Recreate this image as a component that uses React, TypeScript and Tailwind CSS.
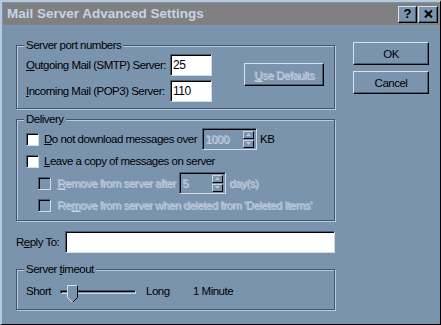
import type { ReactNode } from "react";

const font = { fontFamily: '"Liberation Sans", Arial, sans-serif' };

function Raised({ children, className = "" }: { children: ReactNode; className?: string }) {
  return (
    <div
      className={`flex items-center justify-center border border-t-[#d4e2f0] border-l-[#d4e2f0] border-r-black border-b-black shadow-[inset_-1px_-1px_0_#4a5c70] ${className}`}
    >
      {children}
    </div>
  );
}

function Sunken({ children, className = "" }: { children?: ReactNode; className?: string }) {
  return (
    <div
      className={`flex items-center border border-t-[#4a5c70] border-l-[#4a5c70] border-r-[#d0dcea] border-b-[#d0dcea] shadow-[inset_1px_1px_0_#000] ${className}`}
    >
      {children}
    </div>
  );
}

function Group({ label, className = "", children }: { label: ReactNode; className?: string; children: ReactNode }) {
  return (
    <div
      className={`relative w-[319px] border border-[#43556a] shadow-[1px_1px_0_#b8cade,inset_1px_1px_0_#b8cade] ${className}`}
    >
      <span className="absolute -top-[8px] left-[7px] bg-[#7b94ae] px-[2px] leading-[14px]">{label}</span>
      {children}
    </div>
  );
}

function Check({ disabled = false }: { disabled?: boolean }) {
  return (
    <Sunken className={`w-[13px] h-[13px] shrink-0 ${disabled ? "bg-[#7b94ae]" : "bg-white"}`} />
  );
}

function Disabled({ children }: { children: ReactNode }) {
  return <span className="text-[#aabdd0] [text-shadow:1px_1px_0_#c6d4e2]">{children}</span>;
}

function Spin({ value, className = "" }: { value: string; className?: string }) {
  return (
    <Sunken className={`h-[22px] shrink-0 justify-between bg-[#7b94ae] pl-[2px] pr-[2px] ${className}`}>
      <Disabled>{value}</Disabled>
      <div className="flex flex-col gap-[1px]">
        {[0, 1].map((i) => (
          <div
            key={i}
            className="w-[11px] h-[8px] flex items-center justify-center border border-t-[#c8d6e4] border-l-[#c8d6e4] border-r-black border-b-black"
          >
            <svg width="5" height="3" viewBox="0 0 5 3">
              <polygon points={i === 0 ? "2.5,0 5,3 0,3" : "0,0 5,0 2.5,3"} fill="#b8c8d8" />
            </svg>
          </div>
        ))}
      </div>
    </Sunken>
  );
}

export default function App() {
  return (
    <div
      style={font}
      className="w-[441px] h-[325px] overflow-hidden whitespace-nowrap bg-[#7b94ae] text-[11.5px] tracking-[-0.5px] leading-[16px] text-black border-t-2 border-l-2 border-r border-b border-t-[#b8cade] border-l-[#b8cade] border-r-black border-b-black"
    >
      {/* title bar */}
      <div className="mt-[1px] mx-[1px] h-[22px] bg-[#808080] flex items-center pl-[4px] pr-[1px] tracking-normal">
        <span className="flex-1 text-[13.5px] font-bold text-[#c4d4e6]">Mail Server Advanced Settings</span>
        <Raised className="w-[19px] h-[17px] bg-[#7b94ae]">
          <span className="font-bold text-[13px]">?</span>
        </Raised>
        <Raised className="w-[20px] h-[17px] bg-[#7b94ae] ml-[1px]">
          <svg width="9" height="8" viewBox="0 0 9 8">
            <path d="M1 0.5 L8 7.5 M8 0.5 L1 7.5" stroke="#000" strokeWidth="2" />
          </svg>
        </Raised>
      </div>

      <div className="flex pl-[14px]">
        {/* left column */}
        <div className="flex flex-col">
          <Group label="Server port numbers" className="mt-[20px] h-[64px]">
            <div className="flex pl-[9px] pt-[8px]">
              <div className="grid grid-cols-[144px_42px] gap-y-[4px] items-center">
                <span>
                  <u>O</u>utgoing Mail (SMTP) Server:
                </span>
                <Sunken className="h-[22px] bg-white pl-[2px] text-[12px]">25</Sunken>
                <span>
                  <u>I</u>ncoming Mail (POP3) Server:
                </span>
                <Sunken className="h-[22px] bg-white pl-[2px] text-[12px]">110</Sunken>
              </div>
              <Raised className="ml-[32px] mt-[9px] w-[80px] h-[23px]">
                <Disabled>
                  <u>U</u>se Defaults
                </Disabled>
              </Raised>
            </div>
          </Group>

          <Group label="Delivery" className="mt-[10px] h-[102px]">
            <div className="flex flex-col pl-[9px] pt-[8px]">
              <div className="flex items-center h-[22px]">
                <Check />
                <span className="ml-[5px] w-[158px]">
                  <u>D</u>o not download messages over
                </span>
                <Spin value="1000" className="w-[55px]" />
                <span className="ml-[3px]">KB</span>
              </div>
              <div className="flex items-center h-[16px] mt-[3px]">
                <Check />
                <span className="ml-[5px]">
                  <u>L</u>eave a copy of messages on server
                </span>
              </div>
              <div className="flex items-center h-[22px] mt-[3px] pl-[12px]">
                <Check disabled />
                <span className="ml-[6px] w-[122px]">
                  <Disabled>
                    <u>R</u>emove from server after
                  </Disabled>
                </span>
                <Spin value="5" className="w-[47px]" />
                <span className="ml-[3px]">
                  <Disabled>day(s)</Disabled>
                </span>
              </div>
              <div className="flex items-center h-[16px] mt-[3px] pl-[12px]">
                <Check disabled />
                <span className="ml-[6px]">
                  <Disabled>
                    Re<u>m</u>ove from server when deleted from 'Deleted Items'
                  </Disabled>
                </span>
              </div>
            </div>
          </Group>

          <div className="flex items-center mt-[10px] h-[22px]">
            <span className="w-[49px]">
              R<u>e</u>ply To:
            </span>
            <Sunken className="w-[270px] h-[22px] bg-white" />
          </div>

          <Group
            label={
              <>
                Server <u>t</u>imeout
              </>
            }
            className="mt-[16px] h-[41px]"
          >
            <div className="flex items-center h-[20px] mt-[11px] pl-[9px]">
              <span className="w-[34px]">Short</span>
              <div className="relative w-[76px] h-[20px]">
                <div className="absolute left-0 right-0 top-[9px] h-[4px] border border-t-[#43556a] border-l-[#43556a] border-r-[#c8d6e4] border-b-[#c8d6e4] shadow-[inset_1px_1px_0_#000]" />
                <svg className="absolute left-[7px] top-[4px]" width="11" height="18" viewBox="0 0 11 18">
                  <polygon points="0.5,0.5 10.5,0.5 10.5,12.5 5.5,17.5 0.5,12.5" fill="#7b94ae" />
                  <polyline points="0.5,12.5 0.5,0.5 10.5,0.5" fill="none" stroke="#d4e2f0" />
                  <polyline points="10.5,0.5 10.5,12.5 5.5,17.5" fill="none" stroke="#000" />
                  <polyline points="0.5,12.5 5.5,17.5" fill="none" stroke="#d4e2f0" />
                </svg>
              </div>
              <span className="ml-[10px] w-[47px]">Long</span>
              <span>1 Minute</span>
            </div>
          </Group>
        </div>

        {/* right column */}
        <div className="flex flex-col gap-[6px] ml-[18px] pt-[17px]">
          <Raised className="w-[76px] h-[23px]">OK</Raised>
          <Raised className="w-[76px] h-[23px]">Cancel</Raised>
        </div>
      </div>
    </div>
  );
}
